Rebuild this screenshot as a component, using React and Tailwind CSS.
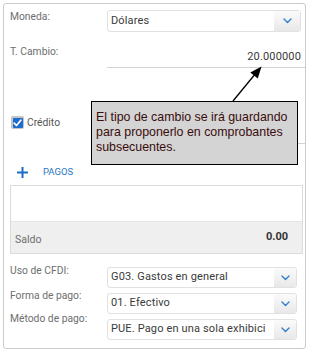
import React from "react";

function Chevron() {
  return (
    <svg width="9" height="6" viewBox="0 0 9 6" fill="none">
      <path d="M1 1 L4.5 4.5 L8 1" stroke="#2f7fd0" strokeWidth="1.4" strokeLinecap="round" strokeLinejoin="round" />
    </svg>
  );
}

function Select({ value, w, h, btn }) {
  return (
    <div
      className={`flex border border-[#e1e1e1] rounded-[3px] bg-white overflow-hidden ${w} ${h}`}
    >
      <div className="flex-1 flex items-center pl-[3px] text-[11px] text-[#3a3a3a] whitespace-nowrap overflow-hidden tracking-[0.15px]">
        {value}
      </div>
      <div className={`${btn} flex items-center justify-center bg-gradient-to-b from-[#fbfbfb] to-[#e8e8e8]`}>
        <Chevron />
      </div>
    </div>
  );
}

export default function App() {
  return (
    <div
      className="relative w-[312px] h-[351px] bg-white pt-[3px] pl-[3px]"
      style={{ fontFamily: "Roboto, 'Liberation Sans', sans-serif" }}
    >
      <div className="w-[303px] h-[346px] border border-[#cbcbcb] rounded-[3px] flex flex-col">
        {/* Moneda */}
        <div className="flex mt-[6px]">
          <div className="w-[103px] pl-[6px] pt-[1px] text-[10.3px] leading-[12px] text-[#6e6e6e]">Moneda:</div>
          <Select value="Dólares" w="w-[194px]" h="h-[22px]" btn="w-[26px]" />
        </div>
        {/* T. Cambio */}
        <div className="flex h-[36px]">
          <div className="w-[103px] pl-[6px] pt-[14px] text-[10.3px] leading-[12px] text-[#6e6e6e]">T. Cambio:</div>
          <div className="flex-1 flex items-end justify-end pr-[4px] pb-[4px] border-b border-[#d2d2d2] text-[11px] leading-[13px] text-[#3a3a3a] tracking-[0.15px]">
            20.000000
          </div>
        </div>
        {/* Crédito */}
        <div className="flex h-[76px]">
          <div className="w-[103px] pl-[7px] pt-[48px] flex items-start">
            <div className="w-[13px] h-[13px] rounded-[2px] bg-[#c4c4c4] p-[1.5px]">
              <div className="w-full h-full bg-[#1d6ccf] rounded-[1px] flex items-center justify-center">
                <svg width="9" height="8" viewBox="0 0 9 8" fill="none">
                  <path d="M1.2 4.2 L3.5 6.5 L7.8 1.2" stroke="white" strokeWidth="1.7" strokeLinecap="round" strokeLinejoin="round" />
                </svg>
              </div>
            </div>
            <span className="ml-[3px] text-[10.3px] leading-[13px] text-[#555]">Crédito</span>
          </div>
          <div className="flex-1 border-b border-[#d2d2d2]" />
        </div>
        {/* PAGOS */}
        <div className="flex items-center mt-[18px] h-[20px] pl-[13px]">
          <svg width="11" height="11" viewBox="0 0 11 11">
            <path d="M5.5 0 V11 M0 5.5 H11" stroke="#1a6fc4" strokeWidth="2" />
          </svg>
          <span className="ml-[15px] text-[9.5px] text-[#2a78c6] tracking-[0px]">PAGOS</span>
        </div>
        {/* Box */}
        <div className="mt-[3px] ml-[6px] w-[293px] h-[69px] border border-[#dcdcdc] flex flex-col">
          <div className="h-[36px] bg-white border-b border-[#e4e4e4]" />
          <div className="flex-1 bg-[#efefef] flex justify-between items-center pl-[4px] pr-[14px]">
            <span className="pt-[5px] text-[10.5px] text-[#6e6e6e]">Saldo</span>
            <span className="pb-[1px] text-[11px] font-bold text-[#333]">0.00</span>
          </div>
        </div>
        {/* Uso de CFDI */}
        <div className="flex items-start mt-[13px]">
          <div className="w-[103px] pl-[6px] -mt-[2px] text-[10.3px] leading-[12px] text-[#6e6e6e]">Uso de CFDI:</div>
          <Select value="G03. Gastos en general" w="w-[190px]" h="h-[21px]" btn="w-[22px]" />
        </div>
        <div className="flex items-start mt-[5px]">
          <div className="w-[103px] pl-[6px] -mt-[3px] text-[10.3px] leading-[12px] text-[#6e6e6e]">Forma de pago:</div>
          <Select value="01. Efectivo" w="w-[190px]" h="h-[21px]" btn="w-[22px]" />
        </div>
        <div className="flex items-start mt-[5px]">
          <div className="w-[103px] pl-[6px] -mt-[6px] text-[10.3px] leading-[12px] text-[#6e6e6e]">Método de pago:</div>
          <Select value="PUE. Pago en una sola exhibici" w="w-[190px]" h="h-[21px]" btn="w-[22px]" />
        </div>
      </div>

      {/* Arrow */}
      <svg className="absolute left-0 top-0" width="312" height="351" style={{ pointerEvents: "none" }}>
        <line x1="233" y1="101" x2="256" y2="73" stroke="black" strokeWidth="1.3" />
        <polygon points="261.5,66.5 257.8,78.6 250.3,72.6" fill="black" />
      </svg>

      {/* Tooltip */}
      <div
        className="absolute left-[91px] top-[101px] w-[207px] h-[64px] bg-[#d4d4d4] border border-black pl-[4px] pt-[8px] text-[12.4px] leading-[15px] text-[#3a0d0d]"
        style={{ fontFamily: "'Liberation Sans', Arial, sans-serif" }}
      >
        El tipo de cambio se irá guardando
        <br />
        para proponerlo en comprobantes
        <br />
        subsecuentes.
      </div>
    </div>
  );
}
